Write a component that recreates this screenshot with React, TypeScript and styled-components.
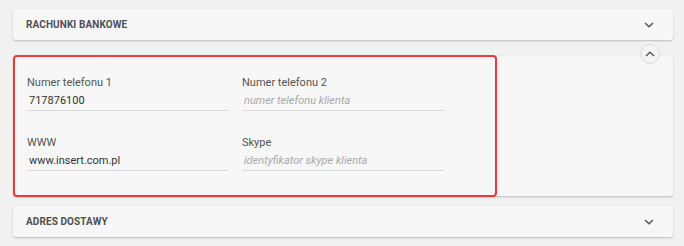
import React from "react";
import styled, { createGlobalStyle } from "styled-components";

const Global = createGlobalStyle`
  html, body { margin: 0; padding: 0; background: #f0f1f0; }
  body { font-family: Roboto, "Liberation Sans", sans-serif; }
  * { box-sizing: border-box; }
`;

const Page = styled.div`
  width: 684px;
  height: 246px;
  padding: 9px 11px 0 13px;
  display: flex;
  flex-direction: column;
  background: #f0f1f0;
`;

const Card = styled.div<{ $mt?: number }>`
  position: relative;
  margin-top: ${(p) => p.$mt ?? 0}px;
  background: #f6f7f6;
  border-radius: 3px;
  box-shadow: 0 1px 2px rgba(0, 0, 0, 0.22);
`;

const Header = styled.div`
  height: 31px;
  display: flex;
  align-items: center;
  justify-content: space-between;
  padding: 0 19px 0 13px;
`;

const Title = styled.span`
  font-size: 10px;
  font-weight: 700;
  color: #505050;
  letter-spacing: 0.1px;
`;

const Body = styled.div`
  display: flex;
  height: 140px;
`;

const Group = styled.div`
  margin: -1px 0 -1px 0;
  width: 484px;
  border: 2px solid #f0393d;
  border-radius: 4px;
  padding: 19px 0 0 12px;
  display: grid;
  grid-template-columns: 201px 202px;
  column-gap: 14px;
  row-gap: 24.5px;
  align-content: start;
`;

const Field = styled.div`
  display: flex;
  flex-direction: column;
  gap: 2px;
`;

const Label = styled.label`
  font-size: 11px;
  line-height: 13px;
  color: #555;
`;

const Input = styled.div<{ $placeholder?: boolean }>`
  height: 20px;
  line-height: 19px;
  padding-left: 2px;
  border-bottom: 1px solid #d9d9d9;
  font-size: 11px;
  color: ${(p) => (p.$placeholder ? "#a9a9a9" : "#333")};
  font-style: ${(p) => (p.$placeholder ? "italic" : "normal")};
  white-space: nowrap;
  overflow: hidden;
`;

const CollapseButton = styled.button`
  position: absolute;
  top: -12px;
  right: 13px;
  width: 20px;
  height: 20px;
  border-radius: 50%;
  border: 1px solid #dcdcdc;
  background: #f3f4f3;
  padding: 0;
  display: flex;
  align-items: center;
  justify-content: center;
`;

const Chevron = ({ up }: { up?: boolean }) => (
  <svg width="10" height="6" viewBox="0 0 10 6" style={{ display: "block" }}>
    <path
      d={up ? "M1 5 L5 1.2 L9 5" : "M1 1 L5 4.8 L9 1"}
      fill="none"
      stroke="#555"
      strokeWidth="1.5"
    />
  </svg>
);

export default function App() {
  return (
    <>
      <Global />
      <Page>
        <Card>
          <Header>
            <Title>RACHUNKI BANKOWE</Title>
            <Chevron />
          </Header>
        </Card>
        <Card $mt={16}>
          <CollapseButton aria-label="zwiń">
            <Chevron up />
          </CollapseButton>
          <Body>
            <Group>
              <Field>
                <Label>Numer telefonu 1</Label>
                <Input>717876100</Input>
              </Field>
              <Field>
                <Label>Numer telefonu 2</Label>
                <Input $placeholder>numer telefonu klienta</Input>
              </Field>
              <Field>
                <Label>WWW</Label>
                <Input>www.insert.com.pl</Input>
              </Field>
              <Field>
                <Label>Skype</Label>
                <Input $placeholder>identyfikator skype klienta</Input>
              </Field>
            </Group>
          </Body>
        </Card>
        <Card $mt={10}>
          <Header>
            <Title>ADRES DOSTAWY</Title>
            <Chevron />
          </Header>
        </Card>
      </Page>
    </>
  );
}
